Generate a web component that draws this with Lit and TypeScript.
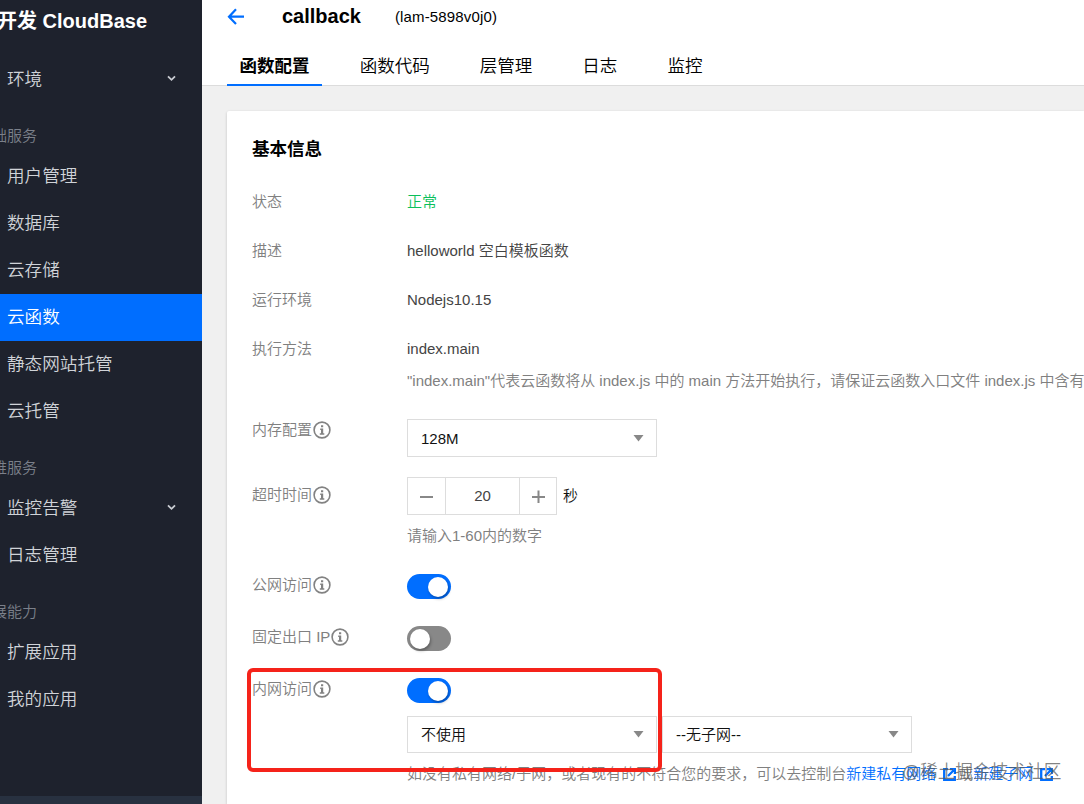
import { LitElement, html, css, nothing } from "lit";
import { customElement, property } from "lit/decorators.js";
import { classMap } from "lit/directives/class-map.js";

const infoIcon = html`<svg class="info" width="18" height="18" viewBox="0 0 18 18" aria-hidden="true">
  <circle cx="9" cy="9" r="7.9" fill="none" stroke="#828282" stroke-width="1.6" />
  <path d="M8 4.2h2.2v2H8zM7.2 7.5h3v4.8h1.1v1.4H6.8v-1.4H8V9h-.8z" fill="#828282" />
</svg>`;

const externalIcon = html`<svg class="external" width="13" height="13" viewBox="0 0 13 13" aria-hidden="true">
  <path d="M5 1.2H1.2v10.6h10.6V8" fill="none" stroke="#006eff" stroke-width="2.3" />
  <path d="M7 1.1h4.9V6M11.5 1.5L5 8" fill="none" stroke="#006eff" stroke-width="2.3" />
</svg>`;

@customElement("side-nav")
class SideNav extends LitElement {
  static styles = css`
    :host { display: flex; flex-direction: column; width: 202px; background: #1e222d; overflow: hidden; }
    .brand { height: 55px; box-sizing: border-box; padding-top: 6px; margin-left: -23px; font-size: 20px; line-height: 30px; font-weight: 700; color: #fff; white-space: nowrap; }
    .group { height: 51px; box-sizing: border-box; padding-top: 22px; margin-left: -23px; font-size: 15px; line-height: 24px; color: #7b808a; white-space: nowrap; }
    .group.short { height: 49px; padding-top: 21px; }
    .item { display: flex; align-items: center; justify-content: space-between; height: 47px; box-sizing: border-box; padding: 0 26px 2px 7px; font-size: 17.6px; line-height: 26px; color: #d0d3d8; }
    .item.low { padding-bottom: 0; }
    .item.active { background: #006eff; color: #fff; padding-bottom: 1px; }
    .foot { height: 8px; margin-top: auto; background: #283140; }
  `;
  private item(text: string, opts: { active?: boolean; open?: boolean; low?: boolean } = {}) {
    return html`<div class=${classMap({ item: true, active: !!opts.active, low: !!opts.low })}>
      <span>${text}</span>
      ${opts.open
        ? html`<svg width="9" height="7" viewBox="0 0 9 7"><path d="M1 1.3l3.5 3.5L8 1.3" fill="none" stroke="#c9ccd2" stroke-width="1.8" /></svg>`
        : nothing}
    </div>`;
  }
  render() {
    return html`
      <div class="brand">云开发 CloudBase</div>
      ${this.item("环境", { open: true, low: true })}
      <div class="group">基础服务</div>
      ${["用户管理", "数据库", "云存储"].map((t) => this.item(t))}
      ${this.item("云函数", { active: true })}
      ${["静态网站托管", "云托管"].map((t) => this.item(t))}
      <div class="group short">运维服务</div>
      ${this.item("监控告警", { open: true, low: true })}
      ${this.item("日志管理", { low: true })}
      <div class="group">扩展能力</div>
      ${["扩展应用", "我的应用"].map((t) => this.item(t))}
      <div class="foot"></div>
    `;
  }
}

@customElement("toggle-switch")
class ToggleSwitch extends LitElement {
  @property({ type: Boolean }) on = false;
  static styles = css`
    :host { display: block; }
    .track { display: flex; align-items: center; width: 44px; height: 25px; box-sizing: border-box; padding: 1px 3px 0; border-radius: 13px; background: #888; }
    .track.on { justify-content: flex-end; background: #006eff; }
    .knob { width: 20px; height: 20px; border-radius: 50%; background: #fff; box-shadow: 1px 2px 3px rgba(0, 0, 0, 0.3); }
  `;
  render() {
    return html`<div class=${classMap({ track: true, on: this.on })}><div class="knob"></div></div>`;
  }
}

@customElement("select-box")
class SelectBox extends LitElement {
  @property() value = "";
  static styles = css`
    :host { display: block; width: 250px; height: 38px; }
    .box { display: flex; align-items: center; justify-content: space-between; height: 100%; box-sizing: border-box; border: 1px solid #ddd; padding: 0 12px 0 13px; background: #fff; color: #111; }
    span { padding-top: 1px; }
  `;
  render() {
    return html`<div class="box"><span>${this.value}</span>
      <svg width="11" height="7" viewBox="0 0 11 7"><path d="M.5 0h10L5.5 6.5z" fill="#888" /></svg>
    </div>`;
  }
}

@customElement("app-root")
class AppRoot extends LitElement {
  static styles = css`
    :host { display: block; font-family: "Liberation Sans", "Noto Sans CJK SC", sans-serif; font-weight: 350; font-size: 15px; line-height: 24px; color: #444; }
    .page { position: relative; display: grid; grid-template-columns: 202px 882px; width: 1084px; height: 804px; overflow: hidden; background: #f0f0f0; }
    .main { display: flex; flex-direction: column; min-width: 0; overflow: hidden; }
    .header { height: 86px; box-sizing: border-box; background: #fff; border-bottom: 1px solid #dcdcdc; padding-left: 25px; flex: none; }
    .heading { display: flex; align-items: center; height: 45px; box-sizing: border-box; padding-bottom: 12px; color: #000; }
    .back { margin-left: 0; }
    .name { margin-left: 38px; margin-top: -1px; font-size: 20px; font-weight: 700; }
    .id { margin-left: 34px; padding-top: 1px; letter-spacing: 0.15px; }
    .tabs { display: flex; gap: 25px; height: 41px; }
    .tab { box-sizing: border-box; height: 41px; padding: 8px 12.5px 0; font-size: 17.55px; line-height: 26px; color: #000; }
    .tab.active { font-weight: 700; border-bottom: 2px solid #006eff; }
    .card { flex: 1; margin: 25px 0 0 25px; padding: 25px 0 0 25px; background: #fff; box-shadow: 0 1px 3px rgba(0, 0, 0, 0.2); border-top-left-radius: 2px; }
    .title { height: 54px; font-size: 17.55px; line-height: 26px; font-weight: 700; color: #000; }
    .row { display: grid; grid-template-columns: 155px 1fr; align-items: start; white-space: nowrap; height: 49px; }
    .row.method { height: 81px; }
    .row.memory { height: 59px; padding-top: 1px; box-sizing: border-box; }
    .row.timeout { height: 96px; }
    .row.toggle { height: 52px; }
    .row.timeout .label { padding-top: 6px; }
    .label { display: flex; align-items: center; color: #808080; }
    .row.memory .label { margin-top: -1px; }
    .info { flex: none; margin: -1px 0 0 1px; }
    .green { color: #0abf5b; }
    .hint { color: #808080; }
    .method .hint { margin-top: 8px; }
    .stepper { display: flex; align-items: center; }
    .count { display: grid; grid-template-columns: 37px 73px 36px; column-gap: 1px; width: 148px; height: 36px; border: 1px solid #ddd; background: #ddd; }
    .cell { display: flex; align-items: center; justify-content: center; background: #fff; }
    .unit { margin-left: 6px; color: #111; }
    .timeout .hint { margin-top: 9px; }
    .switch { margin-top: 1px; }
    .pair { display: flex; gap: 5px; margin-top: 13px; }
    .pair select-box { height: 37px; }
    .intranet .hint { display: flex; align-items: center; margin-top: 9px; }
    .link { color: #006eff; }
    .external { margin: 0 2px 0 7px; }
    .mark { position: absolute; left: 247px; top: 668px; width: 407px; height: 96px; border: 4px solid #f5231a; border-radius: 6px; }
    .stamp { position: absolute; left: 902px; top: 759px; font-size: 17.7px; line-height: 26px; color: rgba(90, 90, 90, 0.75); white-space: nowrap; }
  `;
  private text(label: string, value: string, cls = "") {
    return html`<div class="row"><div class="label">${label}</div><div class=${cls}>${value}</div></div>`;
  }
  render() {
    return html`<div class="page">
      <side-nav></side-nav>
      <div class="main">
        <div class="header">
          <div class="heading">
            <svg class="back" width="17" height="17" viewBox="0 0 17 17"><path d="M9 1.2L2 8.7l7 7.3M2.2 8.7H17" fill="none" stroke="#006eff" stroke-width="2.2" /></svg>
            <span class="name">callback</span><span class="id">(lam-5898v0j0)</span>
          </div>
          <div class="tabs">
            ${["函数配置", "函数代码", "层管理", "日志", "监控"].map(
              (t, i) => html`<div class=${classMap({ tab: true, active: i === 0 })}>${t}</div>`
            )}
          </div>
        </div>
        <div class="card">
          <div class="title">基本信息</div>
          ${this.text("状态", "正常", "green")}
          ${this.text("描述", "helloworld 空白模板函数")}
          ${this.text("运行环境", "Nodejs10.15")}
          <div class="row method">
            <div class="label">执行方法</div>
            <div>
              <div>index.main</div>
              <div class="hint">"index.main"代表云函数将从 index.js 中的 main 方法开始执行，请保证云函数入口文件 index.js 中含有</div>
            </div>
          </div>
          <div class="row memory">
            <div class="label">内存配置${infoIcon}</div>
            <select-box value="128M"></select-box>
          </div>
          <div class="row timeout">
            <div class="label">超时时间${infoIcon}</div>
            <div>
              <div class="stepper">
                <div class="count">
                  <div class="cell"><svg width="13" height="13"><path d="M0 7h13" stroke="#888" stroke-width="2" /></svg></div>
                  <div class="cell">20</div>
                  <div class="cell"><svg width="13" height="13"><path d="M0 7h13M6.5 .5v13" stroke="#888" stroke-width="2" /></svg></div>
                </div>
                <span class="unit">秒</span>
              </div>
              <div class="hint">请输入1-60内的数字</div>
            </div>
          </div>
          <div class="row toggle">
            <div class="label">公网访问${infoIcon}</div>
            <toggle-switch class="switch" on></toggle-switch>
          </div>
          <div class="row toggle">
            <div class="label">固定出口 IP${infoIcon}</div>
            <toggle-switch class="switch"></toggle-switch>
          </div>
          <div class="row intranet">
            <div class="label">内网访问${infoIcon}</div>
            <div>
              <toggle-switch class="switch" on></toggle-switch>
              <div class="pair">
                <select-box value="不使用"></select-box>
                <select-box value="--无子网--"></select-box>
              </div>
              <div class="hint">
                <span>如没有私有网络/子网，或者现有的不符合您的要求，可以去控制台</span><span class="link">新建私有网络</span>${externalIcon}<span>或</span><span class="link">新建子网</span>${externalIcon}
              </div>
            </div>
          </div>
        </div>
      </div>
      <div class="mark"></div>
      <div class="stamp">@稀土掘金技术社区</div>
    </div>`;
  }
}
